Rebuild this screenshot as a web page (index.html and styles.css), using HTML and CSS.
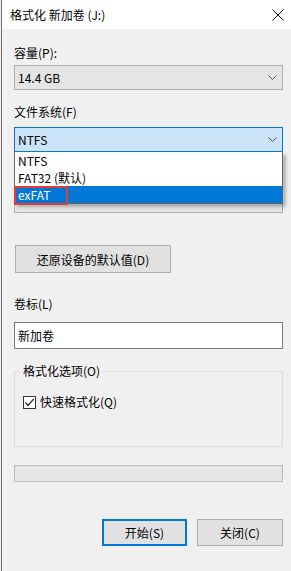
FILE: index.html
```html
<!DOCTYPE html>
<html lang="zh-CN">

<head>
    <meta charset="UTF-8" />
    <meta name="viewport" content="width=device-width, initial-scale=1.0" />
    <title>格式化 新加卷 (J:)</title>
    <link rel="stylesheet" href="styles.css">
</head>

<body>

    <div class="window">
        <div class="titlebar">
            <span class="title">格式化 新加卷 (J:)</span>
            <svg class="close" width="12" height="12" viewBox="0 0 12 12">
                <path d="M0.5 0.5 L11.5 11.5 M11.5 0.5 L0.5 11.5" stroke="#111" stroke-width="1" fill="none" />
            </svg>
        </div>

        <div class="content">
            <div class="label first">容量(P):</div>
            <div class="combo">
                <span>14.4 GB</span>
                <svg class="chev" width="9" height="5" viewBox="0 0 9 5"><path d="M0.5 0.5 L4.5 4.5 L8.5 0.5" stroke="#555" fill="none" /></svg>
            </div>

            <div class="label gap">文件系统(F)</div>
            <div class="combo-wrap">
                <div class="combo active">
                    <span>NTFS</span>
                    <svg class="chev" width="9" height="5" viewBox="0 0 9 5"><path d="M0.5 0.5 L4.5 4.5 L8.5 0.5" stroke="#555" fill="none" /></svg>
                </div>
                <!-- open dropdown list -->
                <ul class="dropdown">
                    <li>NTFS</li>
                    <li>FAT32 (默认)</li>
                    <li class="selected">exFAT</li>
                    <span class="mark"></span>
                </ul>
            </div>

            <!-- allocation size row, covered by the open list -->
            <div class="label gap spacer"></div>
            <div class="combo alloc"></div>

            <button class="btn restore">还原设备的默认值(D)</button>

            <div class="label vol">卷标(L)</div>
            <div class="textbox">新加卷</div>

            <fieldset class="group">
                <legend>格式化选项(O)</legend>
                <label class="check">
                    <span class="box">
                        <svg width="11" height="11" viewBox="0 0 11 11"><path d="M1.5 5.5 L4 8.5 L9.8 1.8" stroke="#222" stroke-width="1.2" fill="none" /></svg>
                    </span>
                    快速格式化(Q)
                </label>
            </fieldset>

            <div class="progress"></div>

            <div class="actions">
                <button class="btn default">开始(S)</button>
                <button class="btn">关闭(C)</button>
            </div>
        </div>
    </div>

</body>

</html>
```

FILE: styles.css
```css
* {
    box-sizing: border-box;
}

body {
    margin: 0;
    font-family: "Noto Sans CJK SC", "Noto Sans", sans-serif;
    font-size: 12px;
    color: #000;
    background-color: #f0f0f0;
}

.window {
    width: 290px;
    height: 571px;
    margin-left: 1px;
    border-left: 1px solid #6e6e6e;
    background-color: #f0f0f0;
}

.titlebar {
    height: 29px;
    background-color: #fff;
    display: flex;
    align-items: center;
    justify-content: space-between;
    padding: 0 7px 0 8px;
}

.title {
    line-height: 16px;
}

.content {
    padding: 0 8px 0 12px;
}

.label {
    line-height: 16px;
}

.label.first {
    margin-top: 16px;
}

.label.gap {
    margin-top: 14px;
}

.label.spacer {
    height: 16px;
}

.combo {
    height: 25px;
    margin-top: 4px;
    background-color: #e5e5e5;
    border: 1px solid #adadad;
    display: flex;
    align-items: center;
    justify-content: space-between;
    padding: 0 5px 0 3px;
}

.combo.active {
    margin-top: 7px;
    background-color: #cce4f7;
    border-color: #0078d7;
}

.combo.alloc {
    margin-top: 6px;
}

.chev {
    display: block;
}

.combo-wrap {
    position: relative;
}

.dropdown {
    position: absolute;
    left: 0;
    right: 0;
    top: 100%;
    margin: 0;
    padding: 0;
    list-style: none;
    background-color: #fff;
    border: 1px solid #646464;
    border-top: none;
    box-shadow: 3px 3px 3px rgba(0, 0, 0, 0.25);
    z-index: 2;
}

.dropdown li {
    height: 17px;
    line-height: 17px;
    padding-left: 3px;
}

.dropdown li.selected {
    background-color: #0078d7;
    color: #fff;
}

.mark {
    position: absolute;
    left: -1px;
    top: 34px;
    width: 54px;
    height: 19px;
    border: 2px solid #e33b3b;
}

.btn {
    font-family: inherit;
    font-size: 12px;
    color: #000;
    background-color: #e1e1e1;
    border: 1px solid #adadad;
    padding: 0;
}

.restore {
    display: block;
    margin: 32px 0 0 1px;
    width: 156px;
    height: 28px;
}

.label.vol {
    margin-top: 23px;
}

.textbox {
    margin-top: 10px;
    height: 27px;
    background-color: #fff;
    border: 1px solid #7a7a7a;
    padding-left: 3px;
    line-height: 25px;
}

.group {
    margin: 14px 0 0 0;
    height: 84px;
    border: 1px solid #dcdcdc;
    padding: 0 6px;
}

.group legend {
    padding: 0 2px;
    line-height: 16px;
}

.check {
    display: flex;
    align-items: center;
    gap: 4px;
    margin: 15px 0 0 2px;
    line-height: 16px;
}

.box {
    width: 13px;
    height: 13px;
    border: 1px solid #333;
    background-color: #fff;
    display: flex;
    align-items: center;
    justify-content: center;
}

.box svg {
    display: block;
}

.progress {
    margin-top: 18px;
    height: 17px;
    background-color: #e6e6e6;
    border: 1px solid #bcbcbc;
}

.actions {
    display: flex;
    justify-content: flex-end;
    gap: 10px;
    margin-top: 37px;
}

.actions .btn {
    width: 86px;
    height: 27px;
}

.actions .btn.default {
    width: 85px;
    border: 2px solid #0078d7;
}
```
